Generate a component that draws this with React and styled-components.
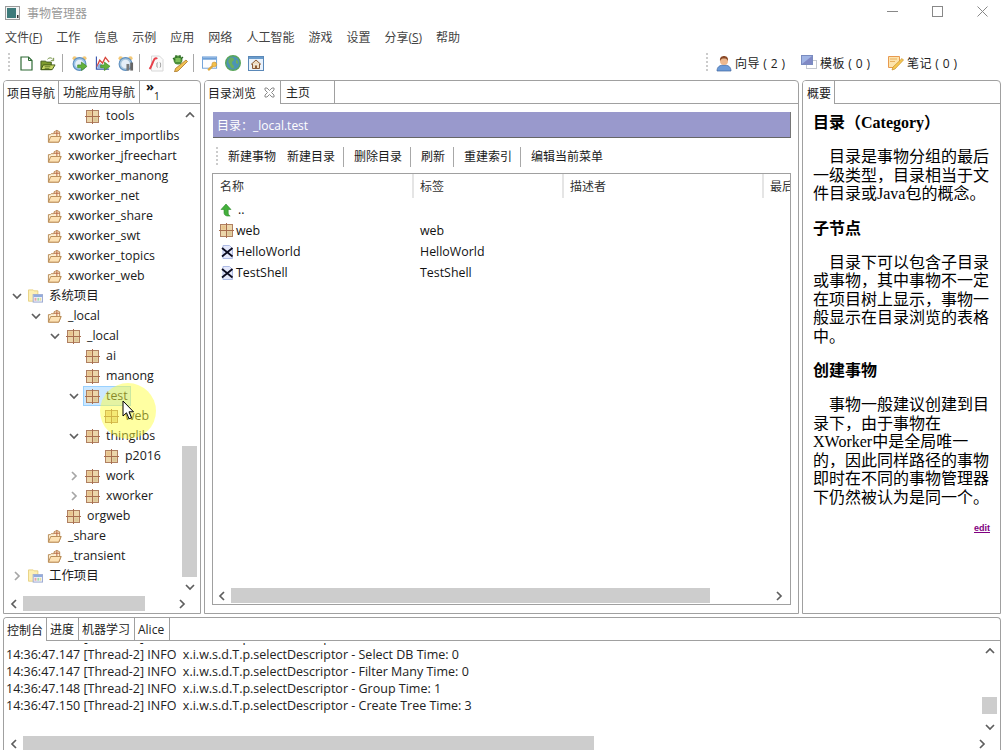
import React from 'react';
import styled, { createGlobalStyle } from 'styled-components';

const GlobalStyle = createGlobalStyle`
  html, body {
    margin: 0;
    padding: 0;
    height: 100%;
    background: #fff;
    overflow: hidden;
  }
  body {
    font-family: 'Open Sans', 'Noto Sans CJK SC', sans-serif;
    font-size: 12px;
    color: #111;
  }
`;

const Window = styled.div`
  position: relative;
  width: 1003px;
  height: 750px;
  display: flex;
  flex-direction: column;
  overflow: hidden;
`;

/* ---------- icons ---------- */

const PackageIcon = () => (
  <svg width="15" height="15" viewBox="0 0 15 15">
    <rect x="1.5" y="1.5" width="12" height="12" fill="#ecd6aa" stroke="#b08062" />
    <rect x="2.5" y="2.5" width="4" height="4" fill="#e8c48c" />
    <rect x="8.5" y="8.5" width="4" height="4" fill="#dcc898" />
    <path d="M7.5 0v15M0 7.5h15" stroke="#a86e4e" strokeWidth="1" />
  </svg>
);

const ProjectIcon = () => (
  <svg width="16" height="15" viewBox="0 0 16 15">
    <path d="M1.5 13.5V5.5h2l1-1h3v-2l3-1.5 3 1.5v5h1.5l-2.5 6z" fill="#fdf0d4" stroke="#b88a54" />
    <path d="M1.5 13.5l2.500-6h11l-2.500 6z" fill="#fde2b4" stroke="#b88a54" />
    <path d="M10.5 1v6M7.5 4h6" stroke="#b5623c" />
  </svg>
);

const SystemFolderIcon = () => (
  <svg width="16" height="16" viewBox="0 0 16 16">
    <path d="M.5 13.5V1.500h5l1 1h4v4h-3v7z" fill="#fdf0b4" stroke="#e6d080" />
    <rect x="5.5" y="6.5" width="10" height="8" fill="#eef0fa" stroke="#9aa8d0" />
    <rect x="6" y="7" width="9" height="2" fill="#8ca8dc" />
    <rect x="7" y="10" width="2" height="3" fill="#e8a4a4" />
    <rect x="10" y="10" width="2" height="3" fill="#a4dca4" />
    <rect x="13" y="10" width="1" height="3" fill="#e8d888" />
  </svg>
);

const ThingIcon = () => (
  <svg width="13" height="14" viewBox="0 0 13 14">
    <path d="M2 .5h6.500l3 3V13.500H2z" fill="#e4e8fb" stroke="#aebbe6" />
    <path d="M1 3l10.500 8.500M11.500 3L1 11.500" stroke="#0c0c20" strokeWidth="1.800" />
  </svg>
);

const UpIcon = () => (
  <svg width="12" height="14" viewBox="0 0 12 14">
    <path d="M6 1l5 5.500H8.200V10c0 1.500.8 2.400 2 3H7C5 12.500 4 11.500 4 9.500v-3H1z" fill="#44b03c" stroke="#2e8a2c" strokeWidth=".6" />
  </svg>
);

const ChevronIcon = ({ $dir = 'down', $color = '#5e5e5e' }) => {
  const d = {
    down: 'M1 3l4 4 4-4',
    up: 'M1 7l4-4 4 4',
    left: 'M7 1L3 5l4 4',
    right: 'M3 1l4 4-4 4',
  }[$dir];
  return (
    <svg width="10" height="10" viewBox="0 0 10 10">
      <path d={d} fill="none" stroke={$color} strokeWidth="1.7" />
    </svg>
  );
};

const ClockBase = ({ children, $face = '#9cc4e8' }) => (
  <svg width="17" height="17" viewBox="0 0 17 17">
    <circle cx="2.8" cy="3" r="2.3" fill="#f2c878" />
    <circle cx="13.2" cy="3" r="2.3" fill="#f2c878" />
    <circle cx="8" cy="9" r="6.8" fill={$face} stroke="#5f90c0" strokeWidth="1.2" />
    <circle cx="8" cy="9" r="4.6" fill="#e6eff8" />
    {children}
  </svg>
);

const GreenArrow = () => (
  <path d="M6 10h4V7l6 4.500-6 4.500v-3H6z" fill="#62b13c" stroke="#3d8a28" strokeWidth=".7" />
);

const Icons = {
  newFile: (
    <svg width="13" height="15" viewBox="0 0 13 15">
      <path d="M1 1h7.500L12 4.500V14H1z" fill="#fff" stroke="#2f6b35" strokeWidth="1.2" />
      <path d="M8.500 1v3.500H12" fill="none" stroke="#2f6b35" />
    </svg>
  ),
  open: (
    <svg width="17" height="15" viewBox="0 0 17 15">
      <path d="M1 14V5h5l1 1h5v8z" fill="#7d9a2e" stroke="#3f5a1a" />
      <path d="M1 14l2.500-5H16l-3 5z" fill="#c9d866" stroke="#3f5a1a" />
      <path d="M5 11h6M5 13h5" stroke="#3f5a1a" strokeWidth=".8" />
      <path d="M8 3c1.500-2 4-2 5.500 0" fill="none" stroke="#6b8a3a" />
      <path d="M14.500 1.500v3h-3" fill="none" stroke="#6b8a3a" />
    </svg>
  ),
  clockGo: <ClockBase><GreenArrow /></ClockBase>,
  chartGo: (
    <svg width="17" height="17" viewBox="0 0 17 17">
      <path d="M1.500 1v13.500H15" fill="none" stroke="#3b58b0" strokeWidth="1.2" />
      <path d="M2 12L5 5l3 3 3-6 4 5" fill="none" stroke="#d8463c" strokeWidth="1.4" />
      <path d="M2.500 14V11l3-3 3 3v3z" fill="#8eb0e0" />
      <GreenArrow />
    </svg>
  ),
  clockGray: (
    <ClockBase $face="#a8c6dc">
      <rect x="9" y="9" width="3" height="7" fill="#7a7a7a" />
      <rect x="13" y="7.5" width="3" height="8.5" fill="#666" />
    </ClockBase>
  ),
  script: (
    <svg width="16" height="17" viewBox="0 0 16 17">
      <path d="M3.500 1h8l3.500 3.500V16H3.500z" fill="#fafafa" stroke="#d8d8d8" />
      <path d="M1.500 14c2-2 3-7 5-10 1-1 2-1 2.500 0" fill="none" stroke="#e8404a" strokeWidth="2" />
      <path d="M9.500 7.500c-1 .5 0 2-1 2.500 1 .5 0 2 1 2.500M12 7.500c1 .5 0 2 1 2.500-1 .5 0 2-1 2.500" fill="none" stroke="#777" strokeWidth=".8" />
    </svg>
  ),
  editor: (
    <svg width="16" height="17" viewBox="0 0 16 17">
      <circle cx="6" cy="5" r="4.500" fill="#4d8f3a" />
      <path d="M1 3l2 2M4 0v3M8 0v3M11 2l-2 2" stroke="#2d6a26" strokeWidth="1.2" />
      <rect x="3.500" y="3" width="5" height="4" fill="#7cc05a" />
      <path d="M14 5l1.500 1.500L6 16l-3.500 1L3.500 13.500z" fill="#f0c050" stroke="#a87428" strokeWidth=".8" />
    </svg>
  ),
  windowKey: (
    <svg width="17" height="17" viewBox="0 0 17 17">
      <rect x=".5" y="1.500" width="15" height="12" fill="#fdfdff" stroke="#6ea0d8" />
      <rect x="1" y="2" width="14" height="2.500" fill="#6ea0d8" />
      <circle cx="13" cy="9.500" r="2.500" fill="#f4c04c" stroke="#c49030" strokeWidth=".6" />
      <path d="M11.500 11l-5 4.500" stroke="#e0a83c" strokeWidth="2.400" />
    </svg>
  ),
  globe: (
    <svg width="16" height="16" viewBox="0 0 16 16">
      <circle cx="8" cy="8" r="7.300" fill="#4c94b4" stroke="#5aa65a" strokeWidth="1.400" />
      <path d="M5 3c2-1 4 0 4 1.500S7 6 7 8s2 2 2 4-2 1.500-3 .5-1-3-2-4-1-4 1-5.500zM11 5c1.500 0 2.500 2 2 4l-2-1z" fill="#6cae60" />
    </svg>
  ),
  home: (
    <svg width="16" height="15" viewBox="0 0 16 15">
      <rect x=".5" y=".5" width="15" height="14" fill="#eaf2fb" stroke="#5a88b8" />
      <rect x="1" y="1" width="14" height="2" fill="#6a9ccc" />
      <path d="M3 8.500l5-4.500 5 4.500M4.500 8v4.500h7V8" fill="#f0dcc0" stroke="#8a5a38" />
      <rect x="7" y="9.500" width="2" height="3" fill="#8a5a38" />
    </svg>
  ),
  user: (
    <svg width="16" height="17" viewBox="0 0 15 17">
      <path d="M.5 16c0-4 2.500-6 7-6s7 2 7 6z" fill="#6a9ad8" stroke="#40659e" strokeWidth=".7" />
      <circle cx="7.500" cy="6" r="4" fill="#ecb88e" />
      <path d="M3.500 6C3 1.500 6 1 7.500 1s4.500.5 4 5c-1-2-2-2.500-4-2.500S4.500 4 3.500 6z" fill="#8a4a28" />
    </svg>
  ),
  template: (
    <svg width="16" height="16" viewBox="0 0 16 16">
      <rect x="5.500" y="5.500" width="10" height="8" fill="#fff" stroke="#c4c8d0" />
      <rect x=".5" y=".5" width="11" height="9" fill="#a0b4e4" stroke="#7a8cc0" />
      <path d="M1 9L11 1v8z" fill="#8088c4" />
    </svg>
  ),
  note: (
    <svg width="16" height="16" viewBox="0 0 16 16">
      <path d="M.5 1.500h11v5L7 12.500H.5z" fill="#fde4ac" stroke="#e89a50" />
      <path d="M2 4h7M2 6.500h5" stroke="#e8b060" />
      <path d="M14 3.500l1.500 1.500L7 14l-3 1 1-3z" fill="#f6c850" stroke="#c89030" strokeWidth=".7" />
    </svg>
  ),
};

/* ---------- title bar and menu ---------- */

const TitleBar = styled.div`
  height: 25px;
  flex: none;
  display: flex;
  align-items: center;
  padding-left: 5px;
  color: #999;
`;

const AppLogo = styled.span`
  display: flex;
  margin-right: 7px;
`;

const WindowButtons = styled.div`
  margin-left: auto;
  display: flex;
  height: 100%;
  padding-right: 15px;
  gap: 34px;
  align-items: flex-start;
  padding-top: 6px;
  box-sizing: border-box;
`;

const MenuBar = styled.div`
  height: 23px;
  flex: none;
  display: flex;
  align-items: center;
  color: #444;
`;

const MenuItem = styled.span`
  padding: 0 7px;
  &:first-child {
    padding-left: 5px;
  }
`;

const MainToolbar = styled.div`
  height: 30px;
  flex: none;
  display: flex;
  align-items: center;
  padding-left: 8px;
  margin-bottom: 2px;
`;

const Grip = styled.span`
  width: 2px;
  height: 20px;
  margin-right: ${p => p.$gap}px;
  background: repeating-linear-gradient(to bottom, #ccc 0 2px, transparent 2px 4px);
`;

const ToolIcon = styled.span`
  display: flex;
  align-items: center;
  justify-content: center;
  width: 16px;
  margin-right: ${p => p.$gap ?? 7}px;
`;

const ToolSep = styled.span`
  width: 1px;
  height: 18px;
  background: #a8a8a8;
  margin: 0 ${p => p.$after ?? 8}px 0 2px;
`;

const ToolRight = styled.div`
  margin-left: auto;
  margin-right: 45px;
  display: flex;
  align-items: center;
`;

const CountButton = styled.span`
  display: flex;
  align-items: center;
  gap: 3px;
  width: ${p => p.$w}px;
  white-space: pre;
  color: #222;
  letter-spacing: 0.4px;
`;

/* ---------- panels ---------- */

const Workspace = styled.div`
  display: flex;
  flex: none;
  gap: 3px;
  height: 534px;
  padding: 0 2px 0 3px;
`;

const Panel = styled.section`
  width: ${p => p.$w}px;
  flex: none;
  box-sizing: border-box;
  border: 1px solid #a0a0a0;
  border-radius: 4px 4px 0 0;
  display: flex;
  flex-direction: column;
  overflow: hidden;
  background: #fff;
`;

const TabStrip = styled.div`
  height: 22px;
  flex: none;
  display: flex;
  border-bottom: 1px solid #a0a0a0;
`;

const Tab = styled.div`
  width: ${p => p.$w}px;
  box-sizing: border-box;
  display: flex;
  align-items: center;
  padding-left: ${p => p.$pad ?? 3}px;
  border-right: 1px solid #a0a0a0;
  color: #222;
  background: #fff;
  height: ${p => (p.$active ? 23 : 22)}px;
  z-index: ${p => (p.$active ? 1 : 0)};
  white-space: nowrap;
`;

const OverflowTab = styled.div`
  width: 40px;
  height: 22px;
  padding-left: 6px;
  box-sizing: border-box;
  line-height: 10px;
  font-size: 13px;
  font-weight: 700;
  b {
    display: block;
    margin-left: 8px;
    font-weight: 400;
    font-size: 10px;
  }
`;

const CloseMark = styled.span`
  display: inline-flex;
  margin-left: 8px;
`;

/* ---------- scrollbars ---------- */

const VBar = styled.div`
  width: 15px;
  flex: none;
  display: flex;
  flex-direction: column;
  align-items: center;
  margin-right: ${p => p.$right ?? 3}px;
`;

const HBar = styled.div`
  height: 15px;
  flex: none;
  display: flex;
  align-items: center;
  margin-bottom: ${p => p.$bottom ?? 0}px;
`;

const ArrowSlot = styled.span`
  flex: none;
  width: ${p => (p.$v ? 15 : p.$size ?? 18)}px;
  height: ${p => (p.$v ? p.$size ?? 15 : 15)}px;
  display: flex;
  align-items: center;
  justify-content: center;
`;

const Track = styled.div`
  flex: 1;
  min-width: 0;
  min-height: 0;
  align-self: stretch;
  display: flex;
  flex-direction: ${p => (p.$v ? 'column' : 'row')};
  align-items: ${p => (p.$v ? 'center' : 'stretch')};
`;

const Thumb = styled.div`
  flex: none;
  background: #cdcdcd;
  width: ${p => (p.$v ? '15px' : `${p.$len}px`)};
  height: ${p => (p.$v ? `${p.$len}px` : '15px')};
  margin-top: ${p => (p.$v ? p.$at : 0)}px;
  margin-left: ${p => (p.$v ? 0 : p.$at)}px;
`;

/* ---------- navigator tree ---------- */

const TreeBody = styled.div`
  flex: 1;
  min-height: 0;
  display: flex;
`;

const TreeList = styled.div`
  flex: 1;
  min-width: 0;
  padding-top: 2px;
  overflow: hidden;
`;

const TreeRow = styled.div`
  height: 20px;
  display: flex;
  align-items: center;
  padding-left: ${p => 6 + p.$level * 19}px;
  white-space: nowrap;
  color: #1a1a1a;
  font-size: 12.4px;
`;

const Twisty = styled.span`
  width: 19px;
  flex: none;
  display: flex;
  justify-content: center;
  padding-right: 7px;
  box-sizing: border-box;
  padding-left: 2px;
`;

const NodeIcon = styled.span`
  width: 15px;
  flex: none;
  display: flex;
  justify-content: center;
  margin-right: 5px;
  margin-left: -1px;
`;

const NodeLabel = styled.span`
  padding: 0 1px 2px;
`;

const SelectBox = styled.span`
  display: flex;
  align-items: center;
  height: 20px;
  box-sizing: border-box;
  margin-left: -3px;
  width: 48px;
  padding-left: 2px;
  background: #cce8ff;
  border: 1px solid #99d1ff;
`;

const Spotlight = styled.div`
  position: absolute;
  left: 100px;
  top: 383px;
  width: 56px;
  height: 56px;
  border-radius: 50%;
  background: rgba(255, 255, 60, 0.48);
  pointer-events: none;
`;

const Pointer = styled.svg`
  position: absolute;
  left: 122px;
  top: 400px;
`;

/* ---------- directory browser ---------- */

const BrowserBody = styled.div`
  flex: 1;
  min-height: 0;
  display: flex;
  flex-direction: column;
  padding: 8px 7px 8px 7px;
`;

const PathBanner = styled.div`
  height: 26px;
  flex: none;
  margin-left: 1px;
  box-sizing: border-box;
  background: #9999cc;
  border-bottom: 1px solid #666;
  border-right: 1px solid #777;
  color: #fff;
  display: flex;
  align-items: center;
  padding-left: 4px;
  font-size: 12px;
`;

const CommandBar = styled.div`
  height: 25px;
  flex: none;
  margin-top: 6px;
  margin-bottom: 4px;
  padding-left: 4px;
  display: flex;
  align-items: center;
  color: #1a1a1a;
  white-space: nowrap;
`;

const Command = styled.span`
  padding-left: ${p => p.$pad ?? 10}px;
  padding-right: ${p => p.$right ?? 8}px;
  border-right: ${p => (p.$sep ? '1px solid #a8a8a8' : '0')};
  line-height: 20px;
  height: 20px;
`;

const FileTable = styled.div`
  flex: 1;
  min-height: 0;
  border: 1px solid #a0a0a0;
  display: flex;
  flex-direction: column;
`;

const HeadRow = styled.div`
  display: flex;
  height: 24px;
  flex: none;
  padding-bottom: 1px;
`;

const HeadCell = styled.div`
  width: ${p => p.$w}px;
  flex: none;
  box-sizing: border-box;
  padding-left: ${p => p.$pad ?? 6}px;
  height: 24px;
  line-height: 25px;
  border-right: ${p => (p.$last ? '0' : '2px solid #e5e5e5')};
  color: #333;
  overflow: hidden;
  white-space: nowrap;
`;

const FileRows = styled.div`
  flex: 1;
  min-height: 0;
  font-size: 12.4px;
`;

const FileRow = styled.div`
  display: flex;
  height: 21px;
  align-items: center;
`;

const NameCell = styled.div`
  width: 207px;
  flex: none;
  display: flex;
  align-items: center;
  gap: ${p => p.$gap ?? 2}px;
  padding-left: ${p => p.$pad ?? 7}px;
  box-sizing: border-box;
`;

const TableBar = styled(HBar)`
  margin: 0 2px 1px 0;
`;

/* ---------- overview ---------- */

const Overview = styled.article`
  flex: 1;
  padding: 0 10px;
  font-family: 'Liberation Serif', 'Noto Sans CJK SC', serif;
  font-size: 16px;
  line-height: 18.5px;
  color: #000;
`;

const OverviewHeading = styled.h3`
  margin: ${p => p.$top}px 0 0;
  font-size: 16px;
  font-weight: 700;
  line-height: 20px;
`;

const OverviewText = styled.p`
  margin: 15px 0 0;
  text-indent: 1em;
`;

const EditLink = styled.a`
  display: block;
  margin-top: 15px;
  text-align: right;
  color: #800080;
  font-size: 9px;
  font-weight: 700;
  text-decoration: underline;
  line-height: 12px;
  font-family: 'Liberation Sans', sans-serif;
`;

/* ---------- console ---------- */

const ConsolePanel = styled.section`
  margin: 3px 2px 0 3px;
  height: 133px;
  flex: none;
  border: 1px solid #a0a0a0;
  border-bottom: 0;
  border-radius: 4px 4px 0 0;
  display: flex;
  flex-direction: column;
  overflow: hidden;
`;

const ConsoleBody = styled.div`
  flex: 1;
  min-height: 0;
  display: flex;
`;

const LogLines = styled.div`
  flex: 1;
  min-width: 0;
  overflow: hidden;
  padding-left: 2px;
  color: #222;
  font-size: 12.5px;
  line-height: 17px;
  white-space: pre;
`;

const ClippedLine = styled.div`
  height: 3px;
  margin-top: 2px;
  overflow: hidden;
  display: flex;
  align-items: flex-end;
`;

const consoleTabs = [['控制台', 43], ['进度', 32], ['机器学习', 56], ['Alice', 35]];

const LOG_LINES = [
  '14:36:47.147 [Thread-2] INFO  x.i.w.s.d.T.p.selectDescriptor - Select DB Time: 0',
  '14:36:47.147 [Thread-2] INFO  x.i.w.s.d.T.p.selectDescriptor - Filter Many Time: 0',
  '14:36:47.148 [Thread-2] INFO  x.i.w.s.d.T.p.selectDescriptor - Group Time: 1',
  '14:36:47.150 [Thread-2] INFO  x.i.w.s.d.T.p.selectDescriptor - Create Tree Time: 3',
];

const TREE = [
  { level: 3, icon: 'pkg', label: 'tools' },
  ...['xworker_importlibs', 'xworker_jfreechart', 'xworker_manong', 'xworker_net', 'xworker_share', 'xworker_swt', 'xworker_topics', 'xworker_web']
    .map(label => ({ level: 1, icon: 'project', label })),
  { level: 0, open: true, icon: 'system', label: '系统项目' },
  { level: 1, open: true, icon: 'project', label: '_local' },
  { level: 2, open: true, icon: 'pkg', label: '_local' },
  { level: 3, icon: 'pkg', label: 'ai' },
  { level: 3, icon: 'pkg', label: 'manong' },
  { level: 3, open: true, icon: 'pkg', label: 'test', selected: true },
  { level: 4, icon: 'pkg', label: 'web' },
  { level: 3, open: true, icon: 'pkg', label: 'thinglibs' },
  { level: 4, icon: 'pkg', label: 'p2016' },
  { level: 3, closed: true, icon: 'pkg', label: 'work' },
  { level: 3, closed: true, icon: 'pkg', label: 'xworker' },
  { level: 2, icon: 'pkg', label: 'orgweb' },
  { level: 1, icon: 'project', label: '_share' },
  { level: 1, icon: 'project', label: '_transient' },
  { level: 0, closed: true, icon: 'system', label: '工作项目' },
];

const nodeIcons = { pkg: <PackageIcon />, project: <ProjectIcon />, system: <SystemFolderIcon /> };

const MENU = [
  <>文件(<u>F</u>)</>, '工作', '信息', '示例', '应用', '网络', '人工智能', '游戏', '设置',
  <>分享(<u>S</u>)</>, '帮助',
];

const TreeItem = ({ level, open, closed, icon, label, selected }) => (
  <TreeRow $level={level}>
    <Twisty>
      {open && <ChevronIcon $dir="down" />}
      {closed && <ChevronIcon $dir="right" $color="#a6a6a6" />}
    </Twisty>
    {selected ? (
      <SelectBox>
        <NodeIcon>{nodeIcons[icon]}</NodeIcon>
        <NodeLabel>{label}</NodeLabel>
      </SelectBox>
    ) : (
      <>
        <NodeIcon>{nodeIcons[icon]}</NodeIcon>
        <NodeLabel>{label}</NodeLabel>
      </>
    )}
  </TreeRow>
);

const App = () => (
  <Window>
    <GlobalStyle />
    <TitleBar>
      <AppLogo>
        <svg width="15" height="14" viewBox="0 0 15 14">
          <rect x=".5" y=".5" width="14" height="13" fill="#f4f4f4" stroke="#9a9a9a" />
          <rect x="2" y="2" width="9" height="10" fill="#3d7a7a" />
          <rect x="12" y="9" width="1.500" height="3" fill="#333" />
        </svg>
      </AppLogo>
      事物管理器
      <WindowButtons>
        <svg width="11" height="11" viewBox="0 0 11 11"><path d="M0 5.500h11" stroke="#888" /></svg>
        <svg width="11" height="11" viewBox="0 0 11 11"><rect x=".5" y=".5" width="10" height="10" fill="none" stroke="#888" /></svg>
        <svg width="11" height="11" viewBox="0 0 11 11"><path d="M.5 .5l10 10M10.500 .5l-10 10" stroke="#888" /></svg>
      </WindowButtons>
    </TitleBar>
    <MenuBar>
      {MENU.map((m, i) => <MenuItem key={i}>{m}</MenuItem>)}
    </MenuBar>
    <MainToolbar>
      <Grip $gap={8} />
      <ToolIcon $gap={6}>{Icons.newFile}</ToolIcon>
      <ToolIcon $gap={4}>{Icons.open}</ToolIcon>
      <ToolSep $after={9} />
      <ToolIcon>{Icons.clockGo}</ToolIcon>
      <ToolIcon>{Icons.chartGo}</ToolIcon>
      <ToolIcon $gap={3}>{Icons.clockGray}</ToolIcon>
      <ToolSep />
      <ToolIcon $gap={8}>{Icons.script}</ToolIcon>
      <ToolIcon $gap={3}>{Icons.editor}</ToolIcon>
      <ToolSep />
      <ToolIcon>{Icons.windowKey}</ToolIcon>
      <ToolIcon>{Icons.globe}</ToolIcon>
      <ToolIcon>{Icons.home}</ToolIcon>
      <ToolRight>
        <Grip $gap={8} />
        <CountButton $w={85}>{Icons.user}向导 ( 2 )</CountButton>
        <CountButton $w={87}>{Icons.template}模板 ( 0 )</CountButton>
        <CountButton $w={70}>{Icons.note}笔记 ( 0 )</CountButton>
      </ToolRight>
    </MainToolbar>

    <Workspace>
      <Panel $w={198}>
        <TabStrip>
          <Tab $active $w={55} $pad={3}>项目导航</Tab>
          <Tab $w={81} $pad={4}>功能应用导航</Tab>
          <OverflowTab>»<b>1</b></OverflowTab>
        </TabStrip>
        <TreeBody>
          <TreeList>
            {TREE.map((n, i) => <TreeItem key={i} {...n} />)}
          </TreeList>
          <VBar>
            <ArrowSlot $v $size={22}><ChevronIcon $dir="up" /></ArrowSlot>
            <Track $v><Thumb $v $len={131} $at={320} /></Track>
            <ArrowSlot $v $size={18}><ChevronIcon $dir="down" /></ArrowSlot>
          </VBar>
        </TreeBody>
        <HBar $bottom={2}>
          <ArrowSlot $size={19}><ChevronIcon $dir="left" /></ArrowSlot>
          <Track><Thumb $len={122} $at={0} /></Track>
          <ArrowSlot $size={37}><ChevronIcon $dir="right" /></ArrowSlot>
        </HBar>
      </Panel>

      <Panel $w={595}>
        <TabStrip>
          <Tab $active $w={76}>
            目录浏览
            <CloseMark>
              <svg width="11" height="11" viewBox="0 0 11 11">
                <path d="M1 1h2l2.500 2.500L8 1h2v2L7.500 5.500 10 8v2H8L5.500 7.500 3 10H1V8l2.500-2.500L1 3z" fill="none" stroke="#8a8a8a" />
              </svg>
            </CloseMark>
          </Tab>
          <Tab $w={54} $pad={5}>主页</Tab>
        </TabStrip>
        <BrowserBody>
          <PathBanner>目录：_local.test</PathBanner>
          <CommandBar>
            <Grip $gap={0} />
            <Command $right={7}>新建事物</Command>
            <Command $pad={4} $sep>新建目录</Command>
            <Command $sep>删除目录</Command>
            <Command $sep>刷新</Command>
            <Command $sep>重建索引</Command>
            <Command>编辑当前菜单</Command>
          </CommandBar>
          <FileTable>
            <HeadRow>
              <HeadCell $w={201} $pad={7}>名称</HeadCell>
              <HeadCell $w={150}>标签</HeadCell>
              <HeadCell $w={200}>描述者</HeadCell>
              <HeadCell $w={26} $last>最后</HeadCell>
            </HeadRow>
            <FileRows>
              <FileRow>
                <NameCell $gap={6}><UpIcon />..</NameCell>
              </FileRow>
              <FileRow>
                <NameCell $pad={6}><PackageIcon />web</NameCell>
                <div>web</div>
              </FileRow>
              <FileRow>
                <NameCell $pad={8} $gap={2}><ThingIcon />HelloWorld</NameCell>
                <div>HelloWorld</div>
              </FileRow>
              <FileRow>
                <NameCell $pad={8} $gap={2}><ThingIcon />TestShell</NameCell>
                <div>TestShell</div>
              </FileRow>
            </FileRows>
            <TableBar>
              <ArrowSlot $size={18}><ChevronIcon $dir="left" /></ArrowSlot>
              <Track><Thumb $len={479} $at={0} /></Track>
              <ArrowSlot $size={18}><ChevronIcon $dir="right" /></ArrowSlot>
            </TableBar>
          </FileTable>
        </BrowserBody>
      </Panel>

      <Panel $w={199}>
        <TabStrip>
          <Tab $active $w={32} $pad={4}>概要</Tab>
        </TabStrip>
        <Overview>
          <OverviewHeading $top={9}>目录（Category）</OverviewHeading>
          <OverviewText>目录是事物分组的最后一级类型，目录相当于文件目录或Java包的概念。</OverviewText>
          <OverviewHeading $top={15}>子节点</OverviewHeading>
          <OverviewText>目录下可以包含子目录或事物，其中事物不一定在项目树上显示，事物一般显示在目录浏览的表格中。</OverviewText>
          <OverviewHeading $top={15}>创建事物</OverviewHeading>
          <OverviewText>事物一般建议创建到目录下，由于事物在XWorker中是全局唯一的，因此同样路径的事物即时在不同的事物管理器下仍然被认为是同一个。</OverviewText>
          <EditLink>edit</EditLink>
        </Overview>
      </Panel>
    </Workspace>

    <ConsolePanel>
      <TabStrip>
        {consoleTabs.map(([t, w], i) => (
          <Tab key={t} $active={i === 0} $w={w} $pad={3}>{t}</Tab>
        ))}
      </TabStrip>
      <ConsoleBody>
        <LogLines>
          <ClippedLine><span>14:36:47.147 [Thread-2] INFO  x.i.w.s.d.T.p.selectDescriptor - Get Time: 0</span></ClippedLine>
          {LOG_LINES.map((l, i) => <div key={i}>{l}</div>)}
        </LogLines>
        <VBar>
          <ArrowSlot $v $size={20}><ChevronIcon $dir="up" /></ArrowSlot>
          <Track $v><Thumb $v $len={17} $at={36} /></Track>
          <ArrowSlot $v $size={18}><ChevronIcon $dir="down" /></ArrowSlot>
        </VBar>
      </ConsoleBody>
      <HBar>
        <ArrowSlot $size={19}><ChevronIcon $dir="left" /></ArrowSlot>
        <Track><Thumb $len={571} $at={0} /></Track>
        <ArrowSlot $size={36}><ChevronIcon $dir="right" /></ArrowSlot>
      </HBar>
    </ConsolePanel>

    <Spotlight />
    <Pointer width="13" height="20" viewBox="0 0 13 20">
      <path d="M1 1v15l3.500-3.200 2.500 6 2.500-1-2.500-6h4.500z" fill="#fff" stroke="#000" />
    </Pointer>
  </Window>
);

export default App;
